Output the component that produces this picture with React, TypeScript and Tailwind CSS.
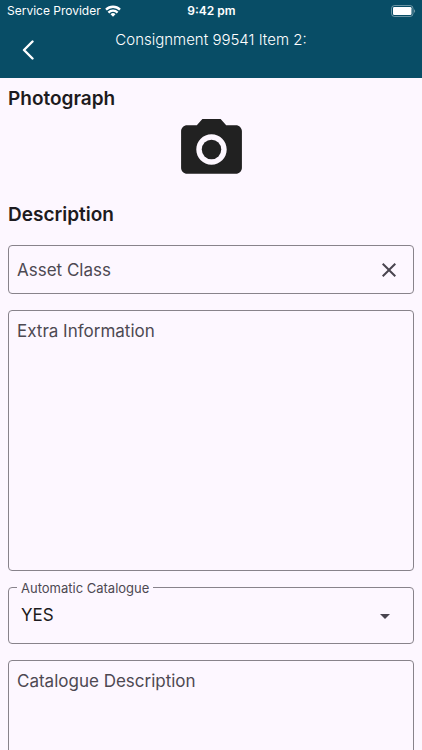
import {useState} from "react"
import {MdArrowDropDown, MdCameraAlt, MdClose} from "react-icons/md"

const StatusBar = () => (
    <div className="grid h-[22px] grid-cols-3 items-center pr-1.5 pl-[7px] text-xs">
        <div className="flex items-center gap-1 whitespace-nowrap">
            <span>Service Provider</span>
            <svg viewBox="0 0 16 12" className="h-3 w-4 shrink-0" fill="none"
                 stroke="currentColor" strokeWidth="2.3">
                <path d="M1 4.6a10 10 0 0 1 14 0"/>
                <path d="M3.4 7.6a6.4 6.4 0 0 1 9.2 0"/>
                <path d="M8 11.8 5.5 9.3a3.5 3.5 0 0 1 5 0z" fill="currentColor" stroke="none"/>
            </svg>
        </div>
        <span className="text-center font-semibold">9:42 pm</span>
        <svg viewBox="0 0 25 12" className="h-3 w-[25px] justify-self-end">
            <rect x="0.5" y="0.5" width="21.5" height="11" rx="3" fill="none"
                  stroke="#fff" strokeOpacity="0.4"/>
            <rect x="2" y="2" width="18.5" height="8" rx="1.2" fill="#fff"/>
            <path d="M23.2 4.2v3.6c1.2-.5 1.2-3.1 0-3.6z" fill="#fff" fillOpacity="0.5"/>
        </svg>
    </div>
)

const Header = () => (
    <header className="shrink-0 bg-[#084d66] text-white">
        <StatusBar/>
        <div className="grid h-14 grid-cols-[56px_1fr_56px]">
            <button type="button" aria-label="Back"
                    className="flex items-center justify-center">
                <svg viewBox="0 0 12 20" className="h-5 w-3" fill="none"
                     stroke="currentColor" strokeWidth="2.4"
                     strokeLinecap="round" strokeLinejoin="round">
                    <path d="M10.5 1.5 2 10l8.5 8.5"/>
                </svg>
            </button>
            <h1 className="pt-1.5 text-center text-[15px] leading-6 font-light">
                Consignment 99541 Item 2:
            </h1>
        </div>
    </header>
)

type NotesFieldProps = {
    id: string
    label: string
}

const NotesField = ({id, label}: NotesFieldProps) => (
    <div className="flex h-[261px] shrink-0 flex-col rounded-[4px] border border-[#88838b] px-2 py-2">
        <label htmlFor={id} className="text-[17px] leading-6 text-[#4d4952]">
            {label}
        </label>
        <textarea id={id}
                  className="w-full flex-1 resize-none bg-transparent text-[17px] outline-none"/>
    </div>
)

export default function App() {
    const [assetClass, setAssetClass] = useState("")
    const [automatic, setAutomatic] = useState("YES")

    return (
        <div
            className="flex h-screen flex-col bg-[#fdf7ff] font-['Inter','Liberation_Sans',sans-serif] text-[#1d1b20]">
            <Header/>
            <main className="flex-1 overflow-y-auto px-2 pt-[9px] [scrollbar-width:none]">
                <h2 className="text-[19px] leading-6 font-semibold">Photograph</h2>
                <div className="flex justify-center pt-0.5">
                    <button type="button" aria-label="Take photograph">
                        <MdCameraAlt className="size-[73px] text-[#212121]"/>
                    </button>
                </div>
                <h2 className="mt-[17px] text-[19px] leading-6 font-semibold">Description</h2>

                <form className="mt-[18px] flex flex-col gap-4">
                    <div
                        className="flex h-[49px] items-center rounded-[4px] border border-[#88838b] pl-2">
                        <label htmlFor="asset-class" className="text-[17px] leading-6 text-[#4d4952]">
                            Asset Class
                        </label>
                        <input
                            id="asset-class"
                            value={assetClass}
                            onChange={(e) => setAssetClass(e.target.value)}
                            className="min-w-0 flex-1 bg-transparent px-2 text-[17px] outline-none"
                        />
                        <button type="button" aria-label="Clear asset class"
                                onClick={() => setAssetClass("")}
                                className="flex h-full w-12 items-center justify-center text-[#49454f]">
                            <MdClose className="size-6"/>
                        </button>
                    </div>

                    <NotesField id="extra-information" label="Extra Information"/>

                    <div className="relative flex h-[57px] items-center rounded-[4px] border border-[#88838b]">
                        <label htmlFor="automatic-catalogue"
                               className="absolute -top-2 left-2 bg-[#fdf7ff] px-1 text-[13px] leading-4 text-[#4d4952]">
                            Automatic Catalogue
                        </label>
                        <select
                            id="automatic-catalogue"
                            value={automatic}
                            onChange={(e) => setAutomatic(e.target.value)}
                            className="h-full w-full appearance-none bg-transparent px-3 text-[17px] outline-none"
                        >
                            <option>YES</option>
                            <option>NO</option>
                        </select>
                        <MdArrowDropDown
                            className="pointer-events-none absolute right-4 size-6 text-[#49454f]"/>
                    </div>

                    <NotesField id="catalogue-description" label="Catalogue Description"/>
                </form>
            </main>
        </div>
    )
}
